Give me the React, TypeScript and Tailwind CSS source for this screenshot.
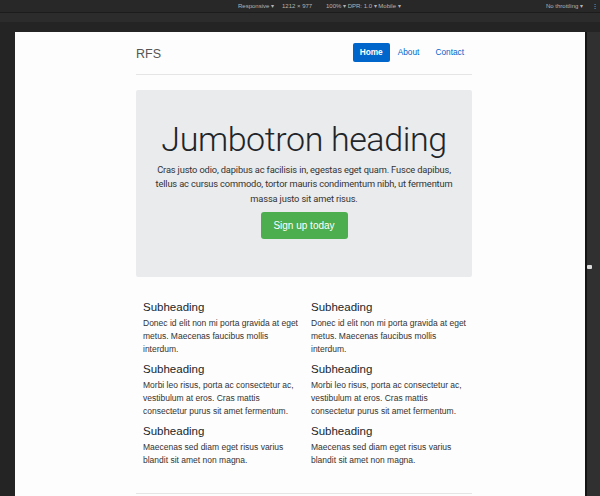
const cols = [
  {
    title: "Subheading",
    body: "Donec id elit non mi porta gravida at eget metus. Maecenas faucibus mollis interdum.",
  },
  {
    title: "Subheading",
    body: "Morbi leo risus, porta ac consectetur ac, vestibulum at eros. Cras mattis consectetur purus sit amet fermentum.",
  },
  {
    title: "Subheading",
    body: "Maecenas sed diam eget risus varius blandit sit amet non magna.",
  },
];

function Column() {
  return (
    <div className="flex flex-col">
      {cols.map((c, i) => (
        <div key={i} className={i > 0 ? "mt-[6px]" : ""}>
          <h4 className="text-[11.5px] leading-[15px] text-[#212529]">{c.title}</h4>
          <p className="mt-[2px] text-[8.5px] leading-[13px] text-[#333]">{c.body}</p>
        </div>
      ))}
    </div>
  );
}

export default function App() {
  return (
    <div className="w-[600px] h-[496px] overflow-hidden bg-[#242424] flex flex-col font-['Liberation_Sans',Arial,sans-serif]">
      <div className="h-[13px] bg-[#282828] border-b border-[#1c1c1c] relative text-[6px] leading-[13px] text-[#b4b4b4]">
        <span className="absolute left-[238px]">Responsive ▾</span>
        <span className="absolute left-[282px]">1212 × 977</span>
        <span className="absolute left-[326px]">100% ▾ DPR: 1.0 ▾ Mobile ▾</span>
        <span className="absolute left-[546px]">No throttling ▾</span>
        <span className="absolute left-[592px]">⋮</span>
      </div>
      <div className="h-[9px] bg-[#2c2c2c]" />
      <div className="h-[10px]" />
      <div className="flex flex-1">
        <div className="w-[15px]" />
        <div className="w-[570px] bg-[#fdfdfd] flex pl-[121px]">
          <div className="w-[336px] flex flex-col">
            <header className="flex items-center justify-between pt-[11px] pb-[12px] border-b border-[#e5e5e5]">
              <h3 className="text-[12.5px] leading-[19px] translate-y-[2px] text-[#555]">RFS</h3>
              <nav className="flex items-center text-[8.3px] text-[#0066cc]">
                <span className="bg-[#0066cc] text-white font-bold rounded-[2px] px-[7px] h-[19px] flex items-center">Home</span>
                <span className="px-[8px]">About</span>
                <span className="px-[8px]">Contact</span>
              </nav>
            </header>
            <section className="mt-[15px] h-[187px] bg-[#e9ebed] rounded-[2px] flex flex-col items-center pt-[29px]">
              <h1 className="font-['Roboto',sans-serif] font-light text-[34px] tracking-[-0.4px] leading-[40px] text-[#212529]">Jumbotron heading</h1>
              <p className="mt-[4px] w-[300px] text-center font-['Roboto',sans-serif] text-[9.3px] tracking-[-0.15px] leading-[14.3px] text-[#333]">
                Cras justo odio, dapibus ac facilisis in, egestas eget quam. Fusce dapibus, tellus ac cursus commodo, tortor mauris condimentum nibh, ut fermentum massa justo sit amet risus.
              </p>
              <button className="mt-[6px] w-[87px] h-[27px] bg-[#4cae4f] text-white text-[10px] rounded-[3px]">Sign up today</button>
            </section>
            <div className="grid grid-cols-[157px_157px] gap-x-[11px] pl-[7px] mt-[23px]">
              <Column />
              <Column />
            </div>
            <div className="mt-auto border-b border-[#e5e5e5] mb-[2px]" />
          </div>
        </div>
        <div className="w-[2px] bg-[#151515]" />
        <div className="flex-1 bg-[#303030] relative">
          <span className="absolute left-[0px] top-[233px] w-[5px] h-[4px] bg-[#ddd] rounded-[1px]" />
        </div>
      </div>
    </div>
  );
}
